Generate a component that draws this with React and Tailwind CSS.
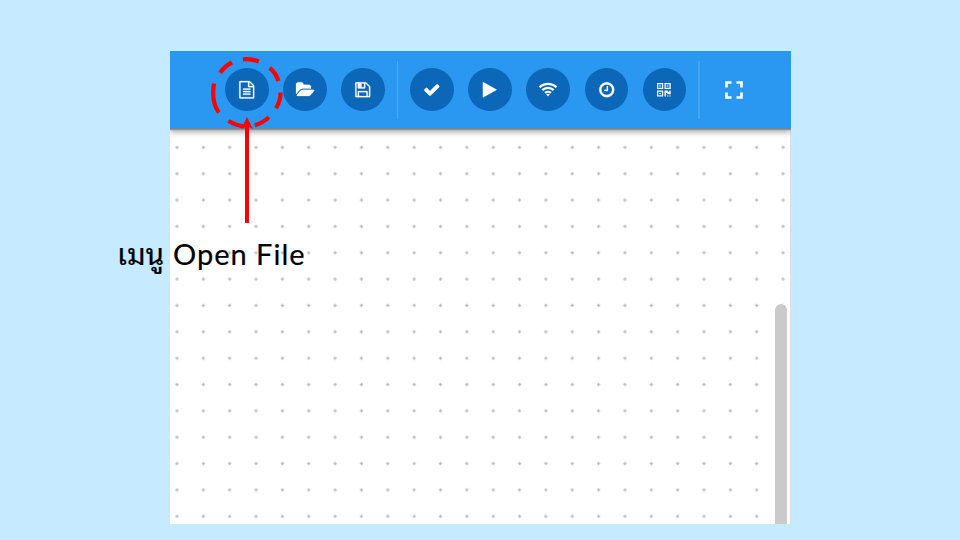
import React from "react";

const PATHS = {
  file: "M1596 380q28 28 48 76t20 88v1152q0 40-28 68t-68 28h-1344q-40 0-68-28t-28-68v-1600q0-40 28-68t68-28h896q40 0 88 20t76 48zm-444-244v376h376q-10-29-22-41l-313-313q-12-12-41-22zm384 1528v-1024h-416q-40 0-68-28t-28-68v-416h-768v1536h1280zm-1024-864q0-14 9-23t23-9h704q14 0 23 9t9 23v64q0 14-9 23t-23 9h-704q-14 0-23-9t-9-23v-64zm736 224q14 0 23 9t9 23v64q0 14-9 23t-23 9h-704q-14 0-23-9t-9-23v-64q0-14 9-23t23-9h704zm0 256q14 0 23 9t9 23v64q0 14-9 23t-23 9h-704q-14 0-23-9t-9-23v-64q0-14 9-23t23-9h704z",
  folder: "M1879 952q0 31-31 66l-336 396q-43 51-120.500 86.500t-143.500 35.500h-1088q-34 0-60.500-13t-26.500-43q0-31 31-66l336-396q43-51 120.500-86.500t143.500-35.500h1088q34 0 60.500 13t26.500 43zm-343-344v160h-832q-94 0-197 47.500t-164 119.500l-337 396-5 6q0-4-.5-12.500t-.5-12.500v-960q0-92 66-158t158-66h320q92 0 158 66t66 158v32h544q92 0 158 66t66 158z",
  save: "M512 1536h768v-384h-768v384zm896 0h128v-896q0-14-10-38.500t-20-34.500l-281-281q-10-10-34-20t-39-10v416q0 40-28 68t-68 28h-576q-40 0-68-28t-28-68v-416h-128v1280h128v-416q0-40 28-68t68-28h832q40 0 68 28t28 68v416zm-384-928v-320q0-13-9.500-22.500t-22.500-9.500h-192q-13 0-22.500 9.500t-9.500 22.500v320q0 13 9.500 22.500t22.500 9.500h192q13 0 22.500-9.500t9.500-22.500zm640 32v928q0 40-28 68t-68 28h-1344q-40 0-68-28t-28-68v-1344q0-40 28-68t68-28h928q40 0 88 20t76 48l280 280q28 28 48 76t20 88z",
  check: "M1671 566q0 40-28 68l-724 724-136 136q-28 28-68 28t-68-28l-136-136-362-362q-28-28-28-68t28-68l136-136q28-28 68-28t68 28l294 295 656-657q28-28 68-28t68 28l136 136q28 28 28 68z",
  play: "M1576 927l-1328 738q-23 13-39.500 3t-16.500-36v-1472q0-26 16.500-36t39.500 3l1328 738q23 13 23 31t-23 31z",
  clock: "M1024 544v448q0 14-9 23t-23 9h-320q-14 0-23-9t-9-23v-64q0-14 9-23t23-9h224v-352q0-14 9-23t23-9h64q14 0 23 9t9 23zm416 352q0-148-73-273t-198-198-273-73-273 73-198 198-73 273 73 273 198 198 273 73 273-73 198-198 73-273zm224 0q0 209-103 385.500t-279.500 279.500-385.500 103-385.500-103-279.500-279.500-103-385.500 103-385.500 279.500-279.500 385.500-103 385.500 103 279.500 279.500 103 385.500z",
};

function Glyph({ name }) {
  return (
    <svg
      viewBox="0 0 1792 1792"
      className="size-[17.500px] overflow-visible"
      fill="currentColor"
      stroke="currentColor"
      strokeWidth="24"
    >
      <path d={PATHS[name]} />
    </svg>
  );
}

function Wifi() {
  return (
    <svg viewBox="0 0 20 16" className="h-4 w-5" fill="none" stroke="currentColor" strokeWidth="2.200">
      <path d="M1.500 5.200a12.300 12.300 0 0 1 17 0M4.300 8.100a8.200 8.200 0 0 1 11.400 0M7.100 10.900a4.200 4.200 0 0 1 5.800 0" />
      <path d="M8.200 12.300q1.800-1.200 3.600 0L10 14.400z" fill="currentColor" stroke="none" />
    </svg>
  );
}

function Qr() {
  return (
    <svg viewBox="0 0 14 14" className="size-[14px]" fill="currentColor">
      <path
        fillRule="evenodd"
        d="M0 0h6.200v6H0zM1.200 1.200v3.600h3.800V1.200zM7.500 0h6.200v6H7.500zM8.700 1.200v3.600h3.800V1.200zM0 7.400h6.200v6.200H0zM1.200 8.700v3.600h3.800V8.700z"
      />
      <path d="M2.100 2.400h2v1.200h-2zM9.600 2.400h2v1.200h-2zM2.100 9.900h2v1.200h-2zM7.500 7.400h3.400v1.300h1.500V7.400h1.300v3.800h-3.500V10H8.900v3.600H7.500zM10.200 12.400h1.200v1.200h-1.200zM12.500 12.400h1.200v1.200h-1.200z" />
    </svg>
  );
}

function Round({ children }) {
  return (
    <button className="flex size-[43.600px] shrink-0 items-center justify-center rounded-full bg-[#0c67b8] text-white">
      {children}
    </button>
  );
}

function Toolbar() {
  return (
    <header className="z-10 flex h-[78px] shrink-0 items-center border-b border-[#6f86a0] bg-[#2a98f0] pl-[55px] shadow-[0_1px_1px_#9a8f8a,0_3px_6px_rgba(0,0,0,0.35)]">
      <div className="flex gap-[14.500px]">
        <Round><Glyph name="file" /></Round>
        <Round><Glyph name="folder" /></Round>
        <Round><Glyph name="save" /></Round>
      </div>
      <div className="ml-3 h-[58px] w-[1.500px] bg-[#4da9f3]" />
      <div className="ml-3 flex gap-[14.500px]">
        <Round><Glyph name="check" /></Round>
        <Round><Glyph name="play" /></Round>
        <Round><Wifi /></Round>
        <Round><Glyph name="clock" /></Round>
        <Round><Qr /></Round>
      </div>
      <div className="ml-3 h-[58px] w-[1.500px] bg-[#45a5f2]" />
      <svg viewBox="0 0 18 18" className="ml-[25px] size-[18px] text-white" fill="none" stroke="currentColor" strokeWidth="2.600">
        <path d="M1.500 6.500V1.500h5M11.500 1.500h5v5M16.500 11.500v5h-5M6.500 16.500h-5v-5" />
      </svg>
    </header>
  );
}

function Canvas() {
  return (
    <div className="flex min-h-0 flex-1 border-r border-[#dedede]">
      <svg className="h-full w-[605px] shrink-0 overflow-visible">
        <defs>
          <pattern id="dots" x="-6.150" y="5.200" width="26.350" height="26.350" patternUnits="userSpaceOnUse">
            <path d="M13.150 11.500v3.400M11.450 13.200h3.400" stroke="#bfbfbf" strokeWidth="1.400" />
          </pattern>
        </defs>
        <path d="M0 0H620V175H604V395H0z" fill="url(#dots)" />
      </svg>
      <div className="z-10 mt-[175px] w-3 shrink-0 rounded-t-full bg-[#cacaca]" />
    </div>
  );
}

export default function App() {
  return (
    <main className="relative h-[540px] w-[960px] overflow-hidden bg-[#c6eaff] pt-[51px] pl-[170px]">
      <section className="isolate flex h-[473px] w-[621px] flex-col overflow-hidden bg-white">
        <Toolbar />
        <Canvas />
      </section>
      <svg className="pointer-events-none absolute inset-0 size-full" viewBox="0 0 960 540" fill="none">
        <path
          stroke="red"
          strokeWidth="4.200"
          d="M243 59.300Q251 58.500 258.800 61.500M269.800 67.800Q276 73 278.500 81M280.500 92.500Q280.800 100 276 108.300M269 117.300Q263 122.800 254.800 125.300M244.500 126.500Q236 125.500 228.300 121M218.800 112.500Q211 101.500 214 83.500M220 72.800Q225 66 232 62.500"
        />
        <path d="M247 223v-97" stroke="red" strokeWidth="4" />
        <path d="M247 117l6 12q-6-4-12 0z" fill="red" />
      </svg>
      <p className="absolute top-[234px] left-[117px] flex h-10 items-center whitespace-nowrap text-black">
        <span className="mb-1 w-[56px] font-['TH_Sarabun_New','Noto_Sans_Thai_Looped','Loma','Garuda','Noto_Sans',sans-serif] text-[29.500px] [-webkit-text-stroke:0.200px_black]">เมนู</span>
        <span className="mb-px font-['Lato',sans-serif] text-[29px] tracking-[1px] [-webkit-text-stroke:0.200px_black]">Open File</span>
      </p>
    </main>
  );
}
